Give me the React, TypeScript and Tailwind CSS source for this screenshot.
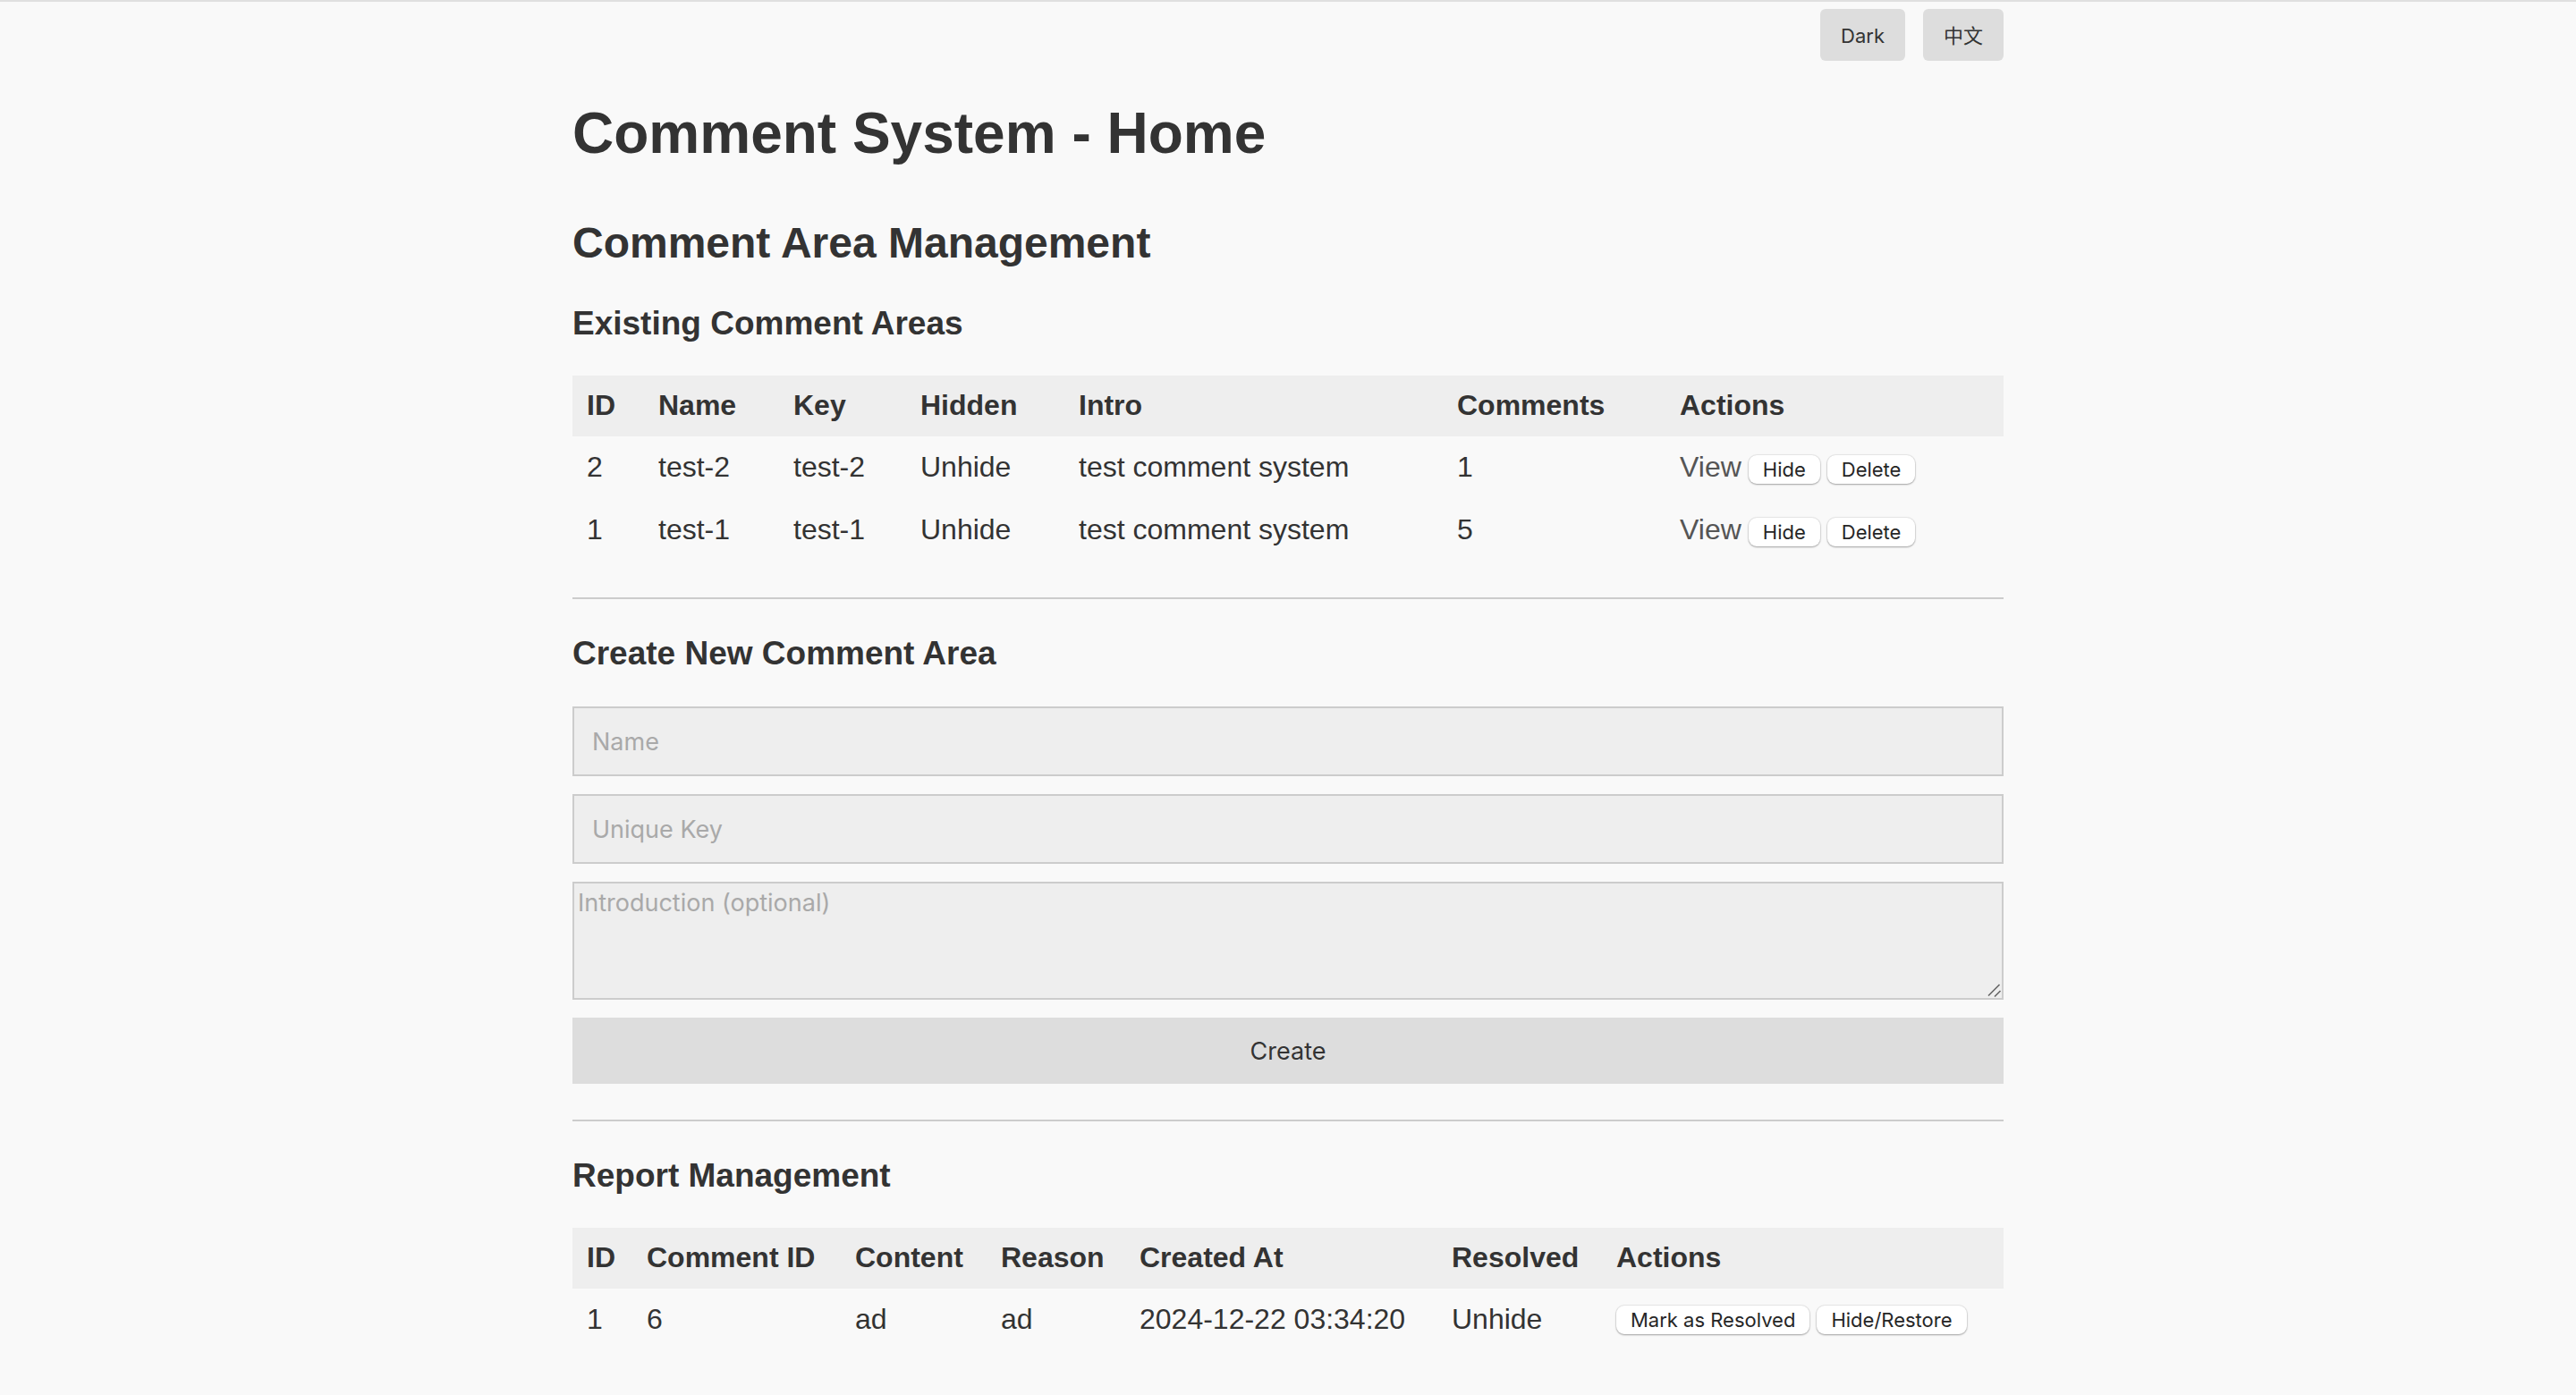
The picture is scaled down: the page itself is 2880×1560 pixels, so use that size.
import React from "react";

const areas = [
  { id: 2, name: "test-2", key: "test-2", hidden: "Unhide", intro: "test comment system", comments: 1 },
  { id: 1, name: "test-1", key: "test-1", hidden: "Unhide", intro: "test comment system", comments: 5 },
];

const reports = [
  { id: 1, commentId: 6, content: "ad", reason: "ad", createdAt: "2024-12-22 03:34:20", resolved: "Unhide" },
];

const areaColumns = [
  { label: "ID", width: "w-[80px]" },
  { label: "Name", width: "w-[151px]" },
  { label: "Key", width: "w-[142px]" },
  { label: "Hidden", width: "w-[177px]" },
  { label: "Intro", width: "w-[423px]" },
  { label: "Comments", width: "w-[249px]" },
  { label: "Actions", width: "w-[378px]" },
];

const reportColumns = [
  { label: "ID", width: "w-[67px]" },
  { label: "Comment ID", width: "w-[233px]" },
  { label: "Content", width: "w-[163px]" },
  { label: "Reason", width: "w-[155px]" },
  { label: "Created At", width: "w-[349px]" },
  { label: "Resolved", width: "w-[184px]" },
  { label: "Actions", width: "w-[449px]" },
];

const uiFont = "font-['Inter','Noto_Sans_CJK_SC',sans-serif]";

function ToolbarButton({ children }: { children: React.ReactNode }) {
  return (
    <button type="button" className={`${uiFont} h-[58px] rounded-md bg-[#ddd] px-[23px] pt-0.5 text-[22px] leading-[28px]`}>
      {children}
    </button>
  );
}

function SmallButton({ children }: { children: React.ReactNode }) {
  return (
    <button
      type="button"
      className={`${uiFont} h-8 rounded-[9px] bg-white px-4 text-[22px] leading-[32px] text-[#262626] shadow-[0_0_1px_1px_rgba(0,0,0,0.07),0_1px_2px_rgba(0,0,0,0.3)]`}
    >
      {children}
    </button>
  );
}

function SectionTitle({ children }: { children: React.ReactNode }) {
  return <h3 className="text-[37px] leading-[42px] font-bold">{children}</h3>;
}

function DataTable({
  columns,
  children,
}: {
  columns: { label: string; width: string }[];
  children: React.ReactNode;
}) {
  return (
    <table className="mt-[37px] w-full table-fixed border-collapse text-left text-[32px] leading-[36px]">
      <colgroup>
        {columns.map((c) => (
          <col key={c.label} className={c.width} />
        ))}
      </colgroup>
      <thead className="bg-[#eee]">
        <tr className="h-[68px]">
          {columns.map((c) => (
            <th key={c.label} scope="col" className="px-4 pb-0.5 font-bold">
              {c.label}
            </th>
          ))}
        </tr>
      </thead>
      <tbody>{children}</tbody>
    </table>
  );
}

const cell = "px-4 pb-0.5";
const field = "block w-full border-2 border-[#ccc] bg-[#eee] text-[27px] placeholder:text-[#a9a9a9] outline-none";

export default function App() {
  return (
    <div className="min-h-screen border-t-2 border-[#e0e0e0] bg-[#f9f9f9] font-['Liberation_Sans',Arial,sans-serif] text-[#333]">
      <div className="mx-auto max-w-[1600px] pt-2 pb-10">
        <header className="flex justify-end gap-5">
          <ToolbarButton>Dark</ToolbarButton>
          <ToolbarButton>中文</ToolbarButton>
        </header>

        <main>
          <h1 className="mt-11 text-[64px] leading-[74px] font-bold">Comment System - Home</h1>
          <h2 className="mt-[58px] mb-[41px] text-[48px] leading-[56px] font-bold">Comment Area Management</h2>

          <section>
            <SectionTitle>Existing Comment Areas</SectionTitle>
            <DataTable columns={areaColumns}>
              {areas.map((a) => (
                <tr key={a.id} className="h-[70px]">
                  <td className={cell}>{a.id}</td>
                  <td className={cell}>{a.name}</td>
                  <td className={cell}>{a.key}</td>
                  <td className={cell}>{a.hidden}</td>
                  <td className={cell}>{a.intro}</td>
                  <td className={cell}>{a.comments}</td>
                  <td className={cell}>
                    <div className="flex items-baseline gap-2">
                      <a href="#view" className="text-[#555]">
                        View
                      </a>
                      <SmallButton>Hide</SmallButton>
                      <SmallButton>Delete</SmallButton>
                    </div>
                  </td>
                </tr>
              ))}
            </DataTable>
          </section>

          <hr className="my-10 border-t-2 border-[#ccc]" />

          <section>
            <SectionTitle>Create New Comment Area</SectionTitle>
            <form className="mt-[38px] flex flex-col gap-5" onSubmit={(e) => e.preventDefault()}>
              <input type="text" aria-label="Name" placeholder="Name" className={`${uiFont} ${field} h-[78px] px-5`} />
              <input
                type="text"
                aria-label="Unique Key"
                placeholder="Unique Key"
                className={`${uiFont} ${field} h-[78px] px-5`}
              />
              <div className="relative">
                <textarea
                  aria-label="Introduction (optional)"
                  placeholder="Introduction (optional)"
                  className={`${uiFont} ${field} h-[132px] resize-none px-1 py-1 leading-[36px]`}
                />
                <svg
                  className="pointer-events-none absolute right-0.5 bottom-0.5 h-4 w-4"
                  viewBox="0 0 16 16"
                  fill="none"
                  stroke="#666"
                  strokeWidth="1.6"
                  aria-hidden="true"
                >
                  <path d="M1 13.5L13.5 1M8 14.5L14.5 8" />
                </svg>
              </div>
              <button type="submit" className={`${uiFont} h-[74px] w-full bg-[#ddd] pt-0.5 text-[27px]`}>
                Create
              </button>
            </form>
          </section>

          <hr className="my-10 border-t-2 border-[#ccc]" />

          <section>
            <SectionTitle>Report Management</SectionTitle>
            <DataTable columns={reportColumns}>
              {reports.map((r) => (
                <tr key={r.id} className="h-[70px]">
                  <td className={cell}>{r.id}</td>
                  <td className={cell}>{r.commentId}</td>
                  <td className={cell}>{r.content}</td>
                  <td className={cell}>{r.reason}</td>
                  <td className={cell}>{r.createdAt}</td>
                  <td className={cell}>{r.resolved}</td>
                  <td className="px-4">
                    <div className="flex items-baseline gap-2">
                      <SmallButton>Mark as Resolved</SmallButton>
                      <SmallButton>Hide/Restore</SmallButton>
                    </div>
                  </td>
                </tr>
              ))}
            </DataTable>
          </section>
        </main>
      </div>
    </div>
  );
}
